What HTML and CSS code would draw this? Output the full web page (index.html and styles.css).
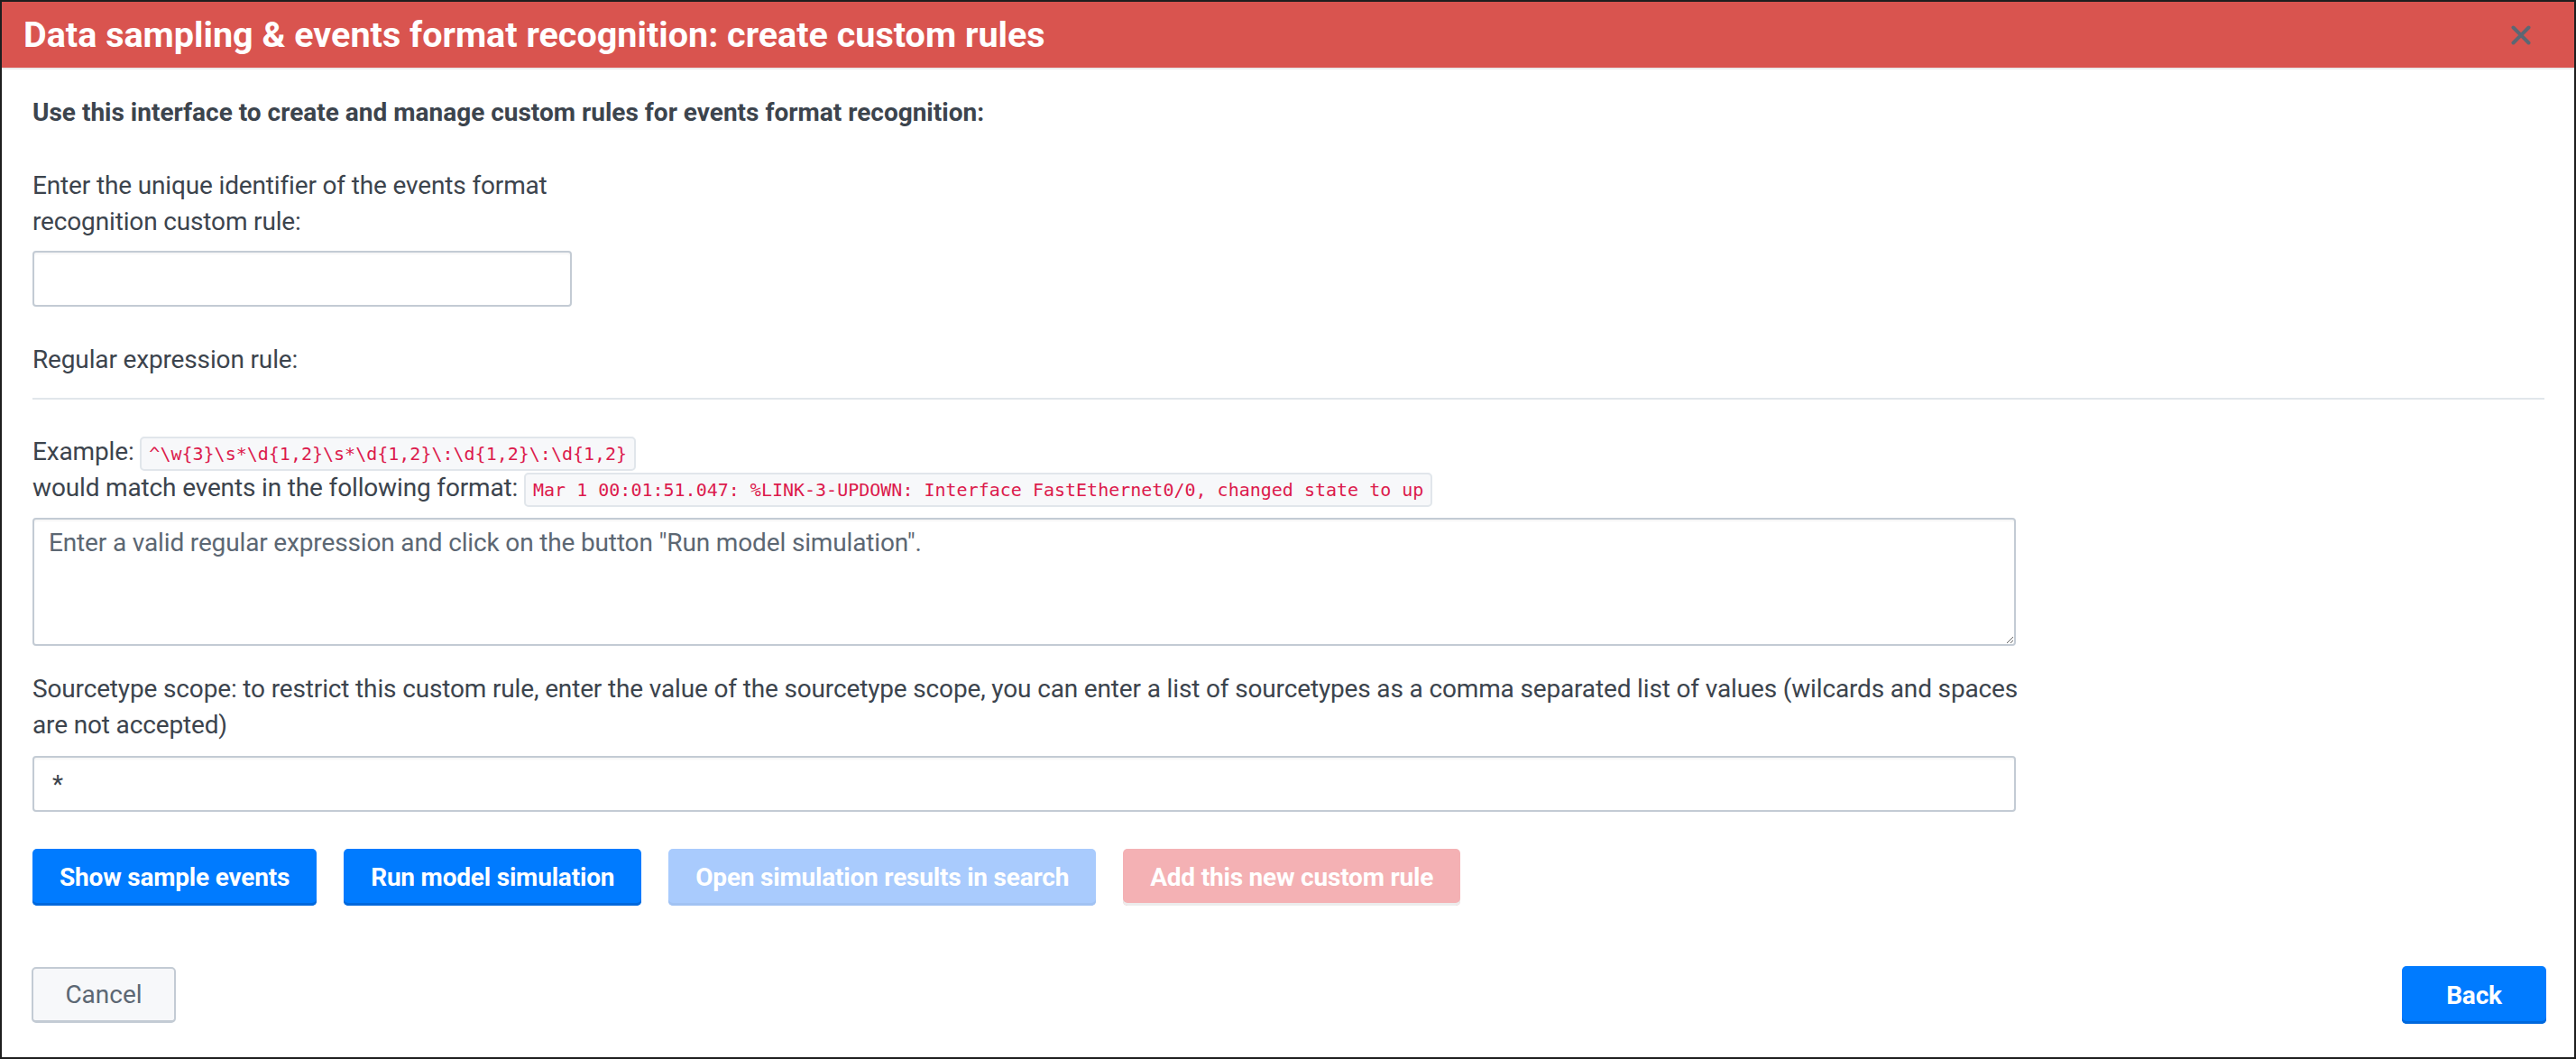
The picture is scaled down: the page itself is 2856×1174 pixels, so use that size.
FILE: index.html
```html
<!DOCTYPE html>
<html lang="en">
<head>
<meta charset="utf-8">
<title>Create custom rules</title>
<link rel="stylesheet" href="styles.css">
</head>
<body>
<div class="modal">
  <header class="modal-header">
    <h1 class="modal-title">Data sampling &amp; events format recognition: create custom rules</h1>
    <button class="close" aria-label="Close">
      <svg width="22" height="22" viewBox="0 0 22 22"><path d="M2.5 2.5L19.5 19.5M19.5 2.5L2.5 19.5" stroke="#5c6773" stroke-width="4" stroke-linecap="round"/></svg>
    </button>
  </header>
  <div class="modal-body">
    <p class="intro">Use this interface to create and manage custom rules for events format recognition:</p>
    <div class="narrow">
      <label class="label">Enter the unique identifier of the events format recognition custom rule:</label>
      <input class="field field-short" type="text">
    </div>
    <p class="section-label">Regular expression rule:</p>
    <hr class="divider">
    <p class="example">Example: <code class="code">^\w{3}\s*\d{1,2}\s*\d{1,2}\:\d{1,2}\:\d{1,2}</code><br>would match events in the following format: <code class="code">Mar 1 00:01:51.047: %LINK-3-UPDOWN: Interface FastEthernet0/0, changed state to up</code></p>
    <textarea class="field field-area" placeholder="Enter a valid regular expression and click on the button &quot;Run model simulation&quot;."></textarea>
    <p class="wide-label">Sourcetype scope: to restrict this custom rule, enter the value of the sourcetype scope, you can enter a list of sourcetypes as a comma separated list of values (wilcards and spaces are not accepted)</p>
    <input class="field field-wide" type="text" value="*">
    <div class="actions">
      <button class="btn btn-primary">Show sample events</button>
      <button class="btn btn-primary">Run model simulation</button>
      <button class="btn btn-primary-disabled">Open simulation results in search</button>
      <button class="btn btn-danger-disabled">Add this new custom rule</button>
    </div>
  </div>
  <footer class="modal-footer">
    <button class="btn btn-default">Cancel</button>
    <button class="btn btn-primary btn-back">Back</button>
  </footer>
</div>
</body>
</html>
```
FILE: styles.css
```css
html, body {
  margin: 0;
  padding: 0;
  background: #1e1e1e;
}

body {
  font-family: Roboto, "Open Sans", sans-serif;
  color: #3c444d;
}

.modal {
  box-sizing: border-box;
  height: 1174px;
  border: 2px solid #1e1e1e;
  background: #fff;
  display: flex;
  flex-direction: column;
}

.modal-header {
  box-sizing: border-box;
  height: 75px;
  background: #d9544f;
  border-bottom: 2px solid #ebebeb;
  display: flex;
  align-items: center;
  justify-content: space-between;
  padding: 0 48px 0 24px;
}

.modal-title {
  margin: 0;
  font-size: 39.5px;
  font-weight: 700;
  color: #fff;
  line-height: 1;
}

.close {
  background: none;
  border: 0;
  padding: 0;
  width: 22px;
  height: 22px;
  display: flex;
}

.modal-body {
  flex: 1;
  padding: 28px 33px 0 34px;
  font-size: 28px;
  line-height: 40px;
  letter-spacing: -0.15px;
}

.intro {
  margin: 0;
  font-weight: 700;
  letter-spacing: 0;
}

.narrow {
  width: 600px;
  margin-top: 41px;
}

.label {
  display: block;
}

.field {
  box-sizing: border-box;
  display: block;
  border: 2px solid #c3cbd4;
  border-radius: 4px;
  background: #fff;
  font-family: Roboto, "Open Sans", sans-serif;
  font-size: 28px;
  letter-spacing: -0.15px;
  color: #3c444d;
  box-shadow: inset 0 2px 2px rgba(0, 0, 0, 0.04);
  margin: 0;
  outline: none;
}

.field-short {
  width: 598px;
  height: 62px;
  margin-top: 12px;
  padding: 0 18px;
}

.section-label {
  margin: 39px 0 0;
}

.divider {
  border: 0;
  border-top: 2px solid #e1e6eb;
  margin: 22px 0 0;
  height: 0;
}

.example {
  margin: 38px 0 0;
}

.code {
  font-family: "DejaVu Sans Mono", monospace;
  font-size: 20px;
  line-height: 20px;
  letter-spacing: 0;
  color: #dc1a4c;
  background: #f7f8fa;
  border: 2px solid #e1e6eb;
  border-radius: 5px;
  padding: 5px 8px;
}

.field-area {
  width: 2199px;
  height: 142px;
  margin-top: 13px;
  padding: 6px 16px;
  line-height: 40px;
  resize: vertical;
}

.field-area::placeholder {
  color: #5c6773;
  opacity: 1;
}

.wide-label {
  width: 2205px;
  margin: 28px 0 0;
}

.field-wide {
  width: 2199px;
  height: 62px;
  margin-top: 14px;
  padding: 0 20px;
}

.actions {
  display: flex;
  gap: 30px;
  margin-top: 41px;
}

.btn {
  box-sizing: border-box;
  height: 63px;
  padding: 0 30px;
  border: 0;
  border-radius: 5px;
  font-family: Roboto, "Open Sans", sans-serif;
  font-size: 28px;
  font-weight: 700;
  letter-spacing: -0.2px;
  color: #fff;
  cursor: pointer;
}

.btn-primary {
  background: #007bff;
  box-shadow: inset 0 -3px 0 #0068dc;
}

.btn-primary-disabled {
  background: #a9cbfd;
  box-shadow: inset 0 -3px 0 #a1c2f2;
}

.btn-danger-disabled {
  background: #f4b1b4;
  box-shadow: inset 0 -3px 0 #ececec;
}

.btn-default {
  background: #f7f8fa;
  color: #5c6773;
  font-weight: 400;
  letter-spacing: 0;
  border: 2px solid #c3cbd4;
  border-bottom-width: 3px;
  height: 62px;
  width: 160px;
  box-shadow: none;
}

.modal-footer {
  display: flex;
  justify-content: space-between;
  align-items: center;
  padding: 0 31px 37px 33px;
}

.btn-back {
  height: 64px;
  width: 160px;
}
```
